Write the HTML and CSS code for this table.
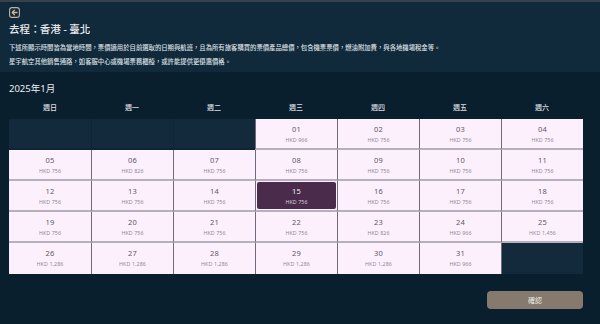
FILE: index.html
```html
<!DOCTYPE html>
<html lang="zh-Hant">
<head>
<meta charset="utf-8">
<link rel="stylesheet" href="styles.css">
</head>
<body>
<header class="header">
  <button class="back" aria-label="返回">
    <svg width="11" height="11" viewBox="0 0 11 11"><rect x="0.6" y="0.6" width="9.8" height="9.8" rx="2.4" fill="none" stroke="#b9b3aa" stroke-width="1.1"/><path d="M8 5.5H3.4M5.4 3.3L3.2 5.5l2.2 2.2" fill="none" stroke="#d8b48a" stroke-width="1.3" stroke-linecap="round" stroke-linejoin="round"/></svg>
  </button>
  <h1 class="title">去程<span class="colon">：</span> 香港 - 臺北</h1>
  <p class="note">下述所顯示時間皆為當地時間，票價適用於目前選取的日期與航班，且為所有旅客購買的票價產品總價，包含機票票價，燃油附加費，與各地機場稅金等。</p>
  <p class="note">星宇航空其他銷售通路，如客服中心或機場票務櫃檯，或許能提供更優惠價格。</p>
</header>
<main class="main">
  <div class="month">2025年1月</div>
  <div class="weekdays">
    <span>週日</span><span>週一</span><span>週二</span><span>週三</span><span>週四</span><span>週五</span><span>週六</span>
  </div>
  <div class="grid">
    <div class="cell empty"></div>
    <div class="cell empty"></div>
    <div class="cell empty"></div>
    <div class="cell"><span class="d">01</span><span class="p">HKD 966</span></div>
    <div class="cell"><span class="d">02</span><span class="p">HKD 756</span></div>
    <div class="cell"><span class="d">03</span><span class="p">HKD 756</span></div>
    <div class="cell"><span class="d">04</span><span class="p">HKD 756</span></div>
    <div class="cell"><span class="d">05</span><span class="p">HKD 756</span></div>
    <div class="cell"><span class="d">06</span><span class="p">HKD 826</span></div>
    <div class="cell"><span class="d">07</span><span class="p">HKD 756</span></div>
    <div class="cell"><span class="d">08</span><span class="p">HKD 756</span></div>
    <div class="cell"><span class="d">09</span><span class="p">HKD 756</span></div>
    <div class="cell"><span class="d">10</span><span class="p">HKD 756</span></div>
    <div class="cell"><span class="d">11</span><span class="p">HKD 756</span></div>
    <div class="cell"><span class="d">12</span><span class="p">HKD 756</span></div>
    <div class="cell"><span class="d">13</span><span class="p">HKD 756</span></div>
    <div class="cell"><span class="d">14</span><span class="p">HKD 756</span></div>
    <div class="cell selected"><div class="sel"><span class="d">15</span><span class="p">HKD 756</span></div></div>
    <div class="cell"><span class="d">16</span><span class="p">HKD 756</span></div>
    <div class="cell"><span class="d">17</span><span class="p">HKD 756</span></div>
    <div class="cell"><span class="d">18</span><span class="p">HKD 756</span></div>
    <div class="cell"><span class="d">19</span><span class="p">HKD 756</span></div>
    <div class="cell"><span class="d">20</span><span class="p">HKD 756</span></div>
    <div class="cell"><span class="d">21</span><span class="p">HKD 756</span></div>
    <div class="cell"><span class="d">22</span><span class="p">HKD 756</span></div>
    <div class="cell"><span class="d">23</span><span class="p">HKD 826</span></div>
    <div class="cell"><span class="d">24</span><span class="p">HKD 966</span></div>
    <div class="cell"><span class="d">25</span><span class="p">HKD 1,456</span></div>
    <div class="cell last"><span class="d">26</span><span class="p">HKD 1,286</span></div>
    <div class="cell last"><span class="d">27</span><span class="p">HKD 1,286</span></div>
    <div class="cell last"><span class="d">28</span><span class="p">HKD 1,286</span></div>
    <div class="cell last"><span class="d">29</span><span class="p">HKD 1,286</span></div>
    <div class="cell last"><span class="d">30</span><span class="p">HKD 1,286</span></div>
    <div class="cell last"><span class="d">31</span><span class="p">HKD 966</span></div>
    <div class="cell empty last"></div>
  </div>
  <div class="actions">
    <button class="confirm">確認</button>
  </div>
</main>
</body>
</html>
```

FILE: styles.css
```css
* { box-sizing: border-box; }
html, body { margin: 0; padding: 0; }
body {
  width: 600px;
  height: 324px;
  overflow: hidden;
  background: #0a1f2d;
  font-family: "Noto Sans CJK TC", "Noto Sans", sans-serif;
  color: #e8e8ea;
}
.header {
  height: 72px;
  background: #10293b;
  border-top: 2px solid #34434d;
  padding: 5px 9px 0;
}
.back {
  display: block;
  width: 11px;
  height: 11px;
  padding: 0;
  border: 0;
  background: none;
}
.back svg { display: block; }
.title {
  margin: 3px 0 0;
  font-size: 10.5px;
  line-height: 16px;
  font-weight: 500;
  color: #e6e7e9;
}
.colon {
  letter-spacing: -3px;
}
.note {
  margin: 0;
  font-size: 6.35px;
  line-height: 14px;
  color: #dfe1e4;
  font-weight: 500;
}
.note:first-of-type { margin-top: 4px; }
.main {
  padding: 10px 17px 0 9px;
}
.month {
  font-family: "Noto Sans", "Noto Sans CJK TC", sans-serif;
  font-size: 9.5px;
  line-height: 14px;
  color: #eceef0;
}
.weekdays {
  display: grid;
  grid-template-columns: repeat(7, 82px);
  margin-top: 4px;
  height: 14px;
  line-height: 14px;
  font-size: 7px;
  text-align: center;
  color: #dcdde0;
  font-weight: 500;
}
.grid {
  margin-top: 5px;
  display: grid;
  grid-template-columns: repeat(7, 82px);
  grid-auto-rows: 31px;
  font-family: "Noto Sans", sans-serif;
}
.cell {
  background: #fdf0fd;
  border-left: 1px solid #6f6b7a;
  border-bottom: 2px solid #b6b0bd;
  display: flex;
  flex-direction: column;
  align-items: center;
  padding-top: 5px;
}
.cell:nth-child(7n+1) { border-left: 0; }
.cell.last { border-bottom: 0; }
.cell.empty {
  background: #122a3b;
  border-left-color: #0f2434;
  border-bottom-color: #0f2434;
}
.cell.empty.last { border-left: 1px solid #6f6b7a; }
.d {
  font-size: 7.5px;
  line-height: 10px;
  color: #5d5865;
  letter-spacing: 0.3px;
}
.p {
  margin-top: 2px;
  font-size: 5.3px;
  line-height: 8px;
  color: #8e8894;
  letter-spacing: 0.1px;
}
.cell.selected {
  padding: 1px 1px 0;
}
.sel {
  width: 100%;
  height: 27px;
  background: #4b2b4b;
  border-radius: 2px;
  display: flex;
  flex-direction: column;
  align-items: center;
  padding-top: 4px;
}
.sel .d { color: #f2eef3; }
.sel .p { color: #d6cdd8; }
.actions {
  display: flex;
  justify-content: flex-end;
  margin-top: 17px;
}
.confirm {
  width: 96px;
  height: 18px;
  border: 0;
  border-radius: 4px;
  background: #857a6d;
  color: #efebe6;
  font-family: "Noto Sans CJK TC", sans-serif;
  font-size: 7px;
  padding: 0;
}
```
